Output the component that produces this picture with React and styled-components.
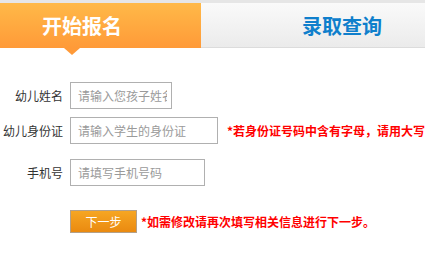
import React from "react";
import styled, { createGlobalStyle } from "styled-components";

const Global = createGlobalStyle`
  html, body { margin: 0; padding: 0; background: #fff; overflow: hidden; }
  body { font-family: "Noto Sans CJK SC", "Microsoft YaHei", sans-serif; width: 425px; }
  * { box-sizing: border-box; }
`;

const Page = styled.div`
  width: 425px;
  height: 261px;
  overflow: hidden;
`;

const TabBar = styled.div`
  display: flex;
  height: 48px;
  border-top: 3px solid #e6e6e6;
  width: 560px;
`;

const Tab = styled.div`
  display: flex;
  align-items: center;
  height: 100%;
  font-size: 20px;
  font-weight: 700;
  padding-left: ${(p) => p.$pad}px;
  width: ${(p) => (p.$w ? `${p.$w}px` : "auto")};
  flex: ${(p) => (p.$w ? "none" : "1")};
  color: ${(p) => (p.$active ? "#fff" : "#0f7fcc")};
  background: ${(p) =>
    p.$active
      ? "linear-gradient(#ffb948, #ff9a38)"
      : "linear-gradient(#fafafa, #ebebeb)"};
  border-bottom: ${(p) => (p.$active ? "none" : "1px solid #dcdcdc")};
  white-space: nowrap;
`;

const PointerRow = styled.div`
  display: flex;
  height: 7px;
  padding-left: 64px;
`;

const Pointer = styled.svg`
  display: block;
  width: 16px;
  height: 7px;
`;

const Form = styled.div`
  display: flex;
  flex-direction: column;
  padding-top: 27px;
`;

const Row = styled.div`
  display: flex;
  align-items: center;
  gap: 7px;
  margin-top: ${(p) => p.$mt || 0}px;
  white-space: nowrap;
`;

const Label = styled.div`
  flex: none;
  width: 63px;
  text-align: right;
  font-size: 12px;
  color: #333;
`;

const Input = styled.input`
  flex: none;
  width: ${(p) => p.$w}px;
  height: 27px;
  border: 1px solid #b0b0b0;
  padding: 0 4px 0 7px;
  font-family: "Noto Sans CJK SC", sans-serif;
  font-size: 12px;
  color: #333;
  outline: none;
  &::placeholder { color: #9a9a9a; }
`;

const Note = styled.div`
  flex: none;
  color: #ff0000;
  font-size: 12px;
  font-weight: 700;
  margin-left: ${(p) => p.$ml}px;
  white-space: nowrap;
`;

const Button = styled.button`
  flex: none;
  width: 67px;
  height: 23px;
  border: 1px solid #b3a089;
  background: linear-gradient(#f6a623, #ea8a10);
  color: #fff;
  font-family: "Noto Sans CJK SC", sans-serif;
  font-size: 12px;
  padding: 0;
  cursor: pointer;
`;

export default function App() {
  return (
    <Page>
      <Global />
      <TabBar>
        <Tab $active $w={201} $pad={42}>开始报名</Tab>
        <Tab $pad={101}>录取查询</Tab>
      </TabBar>
      <PointerRow>
        <Pointer viewBox="0 0 16 7">
          <polygon points="0,0 16,0 8,7" fill="#ff9a38" />
        </Pointer>
      </PointerRow>
      <Form>
        <Row>
          <Label>幼儿姓名</Label>
          <Input $w={102} placeholder="请输入您孩子姓名" />
        </Row>
        <Row $mt={8}>
          <Label>幼儿身份证</Label>
          <Input $w={148} placeholder="请输入学生的身份证" />
          <Note $ml={2}>*若身份证号码中含有字母，请用大写字母输入</Note>
        </Row>
        <Row $mt={15}>
          <Label>手机号</Label>
          <Input $w={135} placeholder="请填写手机号码" />
        </Row>
        <Row $mt={24}>
          <Label />
          <Button>下一步</Button>
          <Note $ml={-3}>*如需修改请再次填写相关信息进行下一步。</Note>
        </Row>
      </Form>
    </Page>
  );
}
